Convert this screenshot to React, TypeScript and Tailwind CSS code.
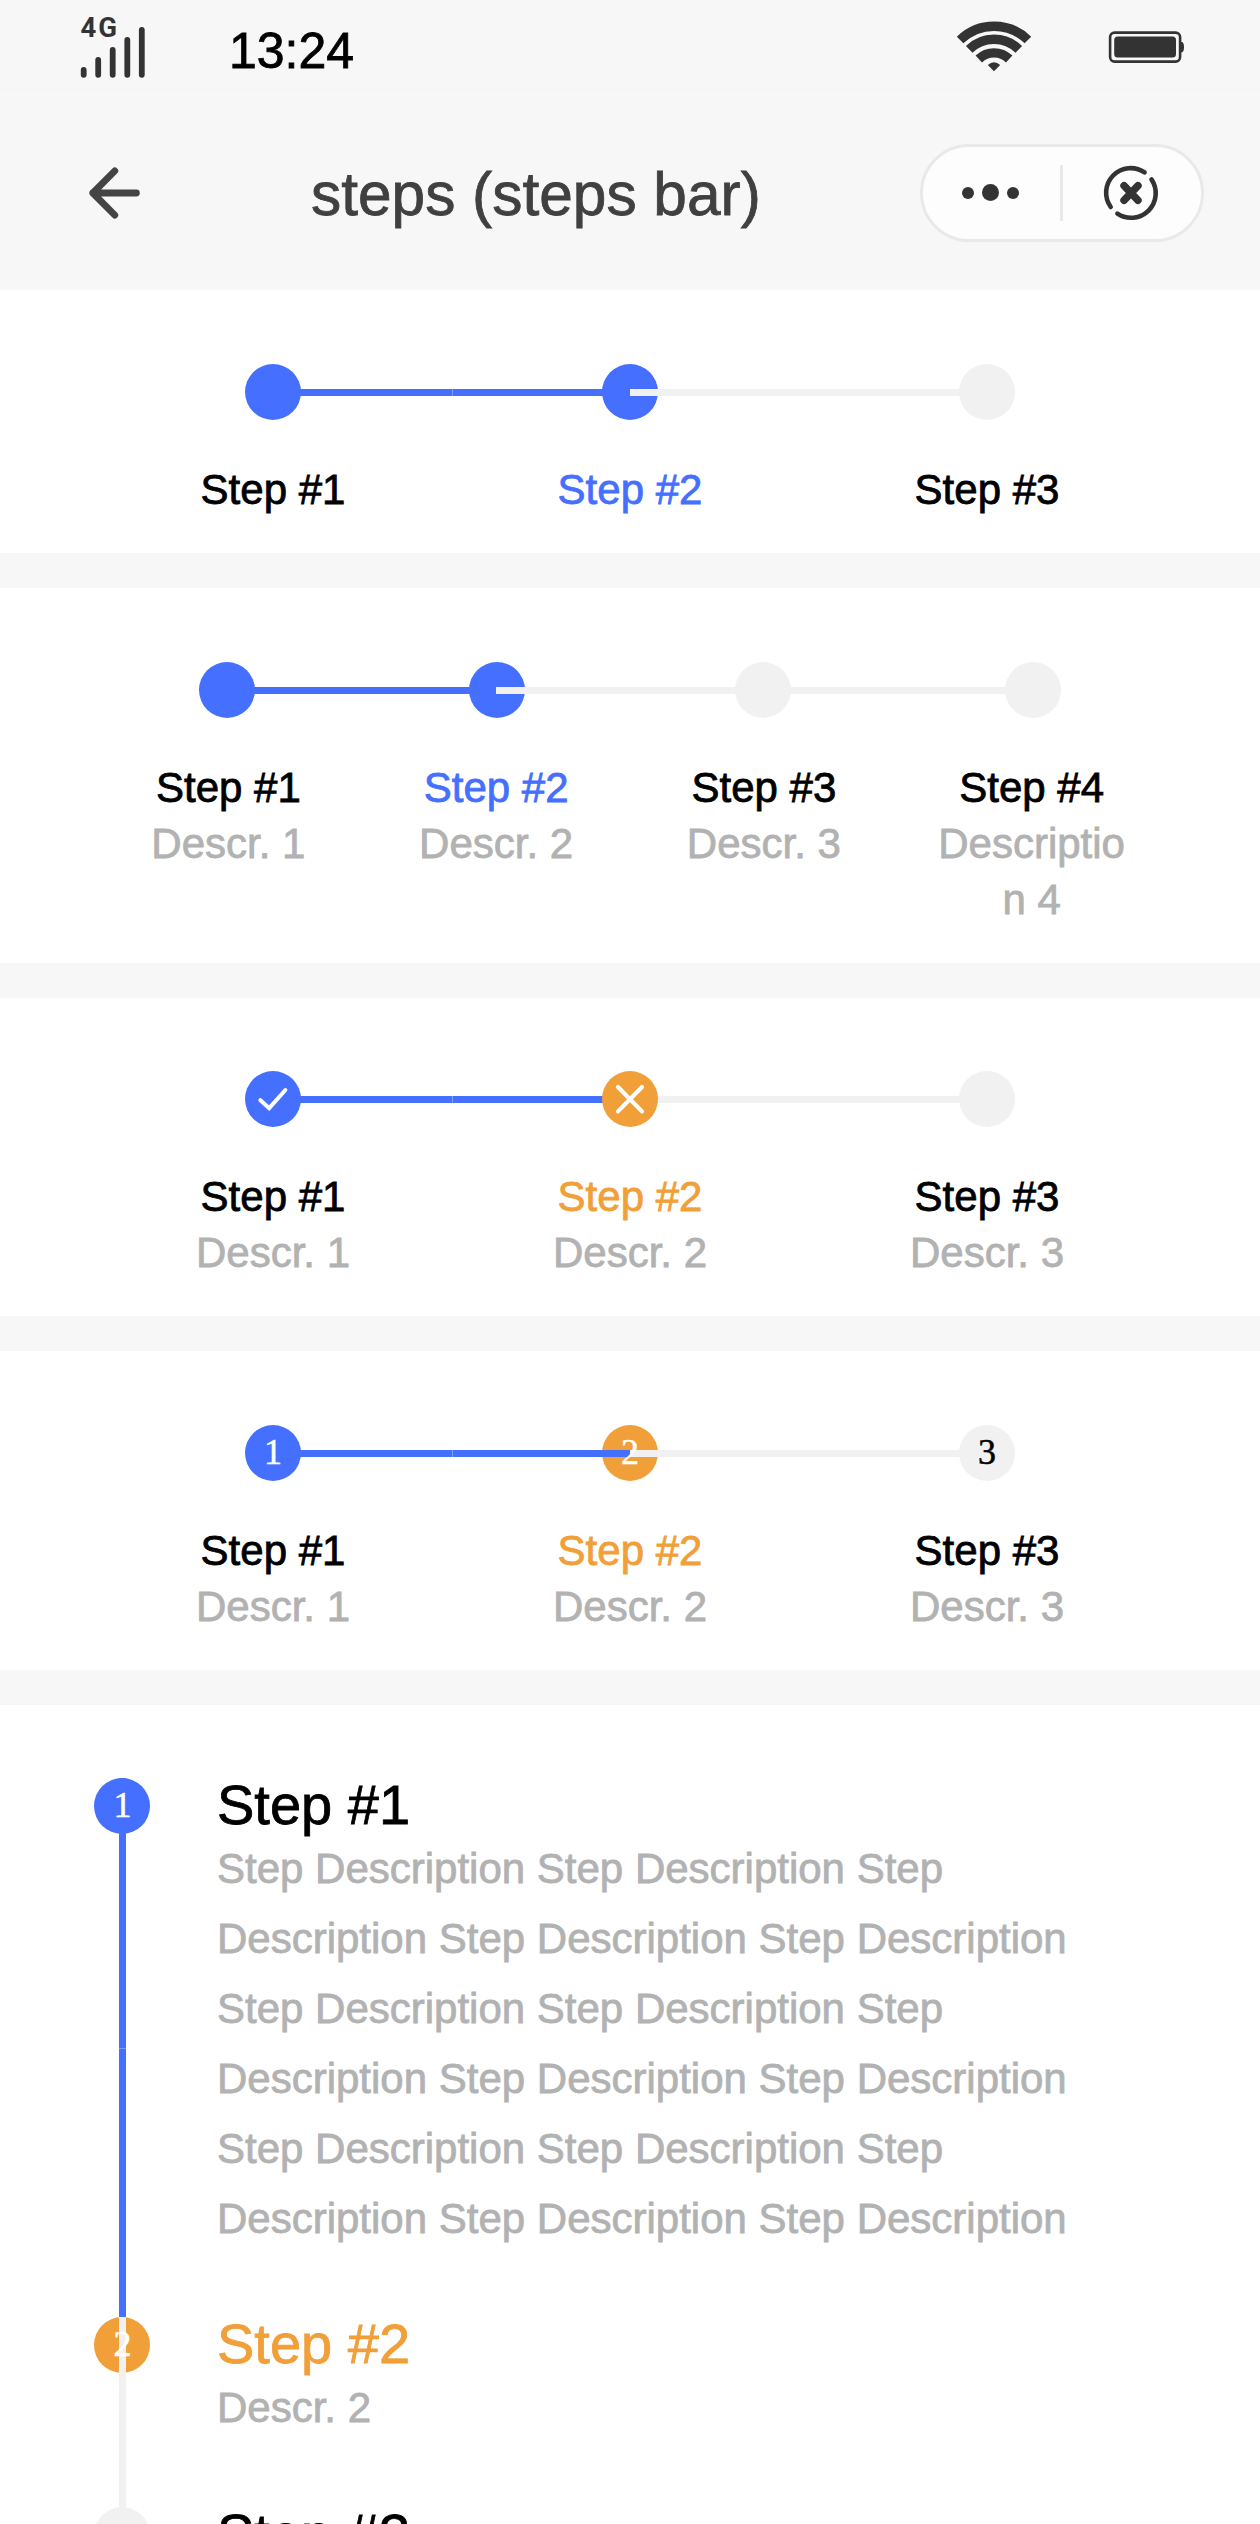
type Tone = "blue" | "gray" | "orange";

interface Step {
  title: string;
  desc?: string;
  tone: Tone;
  active?: boolean;
  mark?: string;
  icon?: "check" | "cross";
  left?: Tone;
  right?: Tone;
  seam?: boolean;
  nudge?: string;
}

const bg: Record<Tone, string> = {
  blue: "bg-[#4570ff]",
  gray: "bg-[#f1f1f1]",
  orange: "bg-[#f19f38]",
};

const ink: Record<Tone, string> = {
  blue: "text-[#4570ff]",
  gray: "text-black",
  orange: "text-[#f19f38]",
};

const HEAVY = "[-webkit-text-stroke:0.8px_currentColor]";

function Mark({ step }: { step: Step }) {
  if (step.icon === "check") {
    return (
      <svg viewBox="0 0 56 56" className="size-14" fill="none" stroke="#fff" strokeWidth="4" strokeLinecap="round">
        <path d="M15.4 29.2 L24.2 37.2 L40.4 19" />
      </svg>
    );
  }
  if (step.icon === "cross") {
    return (
      <svg viewBox="0 0 56 56" className="size-14" fill="none" stroke="#fff" strokeWidth="4.2" strokeLinecap="round">
        <path d="M16 16 L40 40.4 M40 16 L16 40.4" />
      </svg>
    );
  }
  return (
    <span
      className={`font-['Liberation_Serif',serif] text-[36px] leading-[54px] [-webkit-text-stroke:0.5px_currentColor] ${
        step.tone === "gray" ? "text-black" : "text-white"
      }`}
    >
      {step.mark}
    </span>
  );
}

function HorizontalStep({ step }: { step: Step }) {
  return (
    <div className="flex min-w-0 flex-col items-center">
      <div className="relative flex h-14 w-full justify-center">
        {!step.icon && <div className={`size-14 rounded-full ${bg[step.tone]} ${step.nudge ?? ""}`} />}
        {step.left && (
          <div
            className={`absolute left-0 top-[25px] h-[7px] w-1/2 ${bg[step.left]} ${
              step.seam ? "border-l border-[#7f9dff]" : ""
            }`}
          />
        )}
        {step.right && <div className={`absolute left-1/2 top-[25px] h-[7px] w-1/2 ${bg[step.right]}`} />}
        {step.icon && <div className={`relative size-14 rounded-full ${bg[step.tone]}`} />}
        <div className="absolute inset-0 flex items-start justify-center">
          <Mark step={step} />
        </div>
      </div>
      <div className={`mt-[42px] text-[42px] leading-[56px] ${HEAVY} ${step.active ? ink[step.tone] : "text-black"}`}>
        {step.title}
      </div>
      {step.desc && (
        <div className={`w-[190px] text-center text-[42px] leading-[56px] break-all text-[#b2b2b2] ${HEAVY}`}>
          {step.desc}
        </div>
      )}
    </div>
  );
}

function VerticalStep({ step }: { step: Step }) {
  return (
    <div className="flex min-h-[190px]">
      <div className="relative w-[57px] shrink-0">
        <div className={`size-14 rounded-full ${bg[step.tone]}`} />
        <div className={`absolute left-[25px] top-0 h-full w-[7px] ${step.tone === "blue" ? bg.blue : bg.gray}`} />
        {step.seam && <div className="absolute left-[25px] top-1/2 h-px w-[7px] bg-[#7f9dff]" />}
        <div className="absolute inset-x-0 top-0 flex justify-center">
          <Mark step={step} />
        </div>
      </div>
      <div className="ml-[66px] w-[930px] pb-[63px]">
        <div className={`text-[56px] leading-[54px] ${HEAVY} ${step.active ? ink[step.tone] : "text-black"}`}>
          {step.title}
        </div>
        {step.desc && (
          <div className={`mt-0.5 text-[42px] leading-[70px] text-[#b2b2b2] ${HEAVY}`}>{step.desc}</div>
        )}
      </div>
    </div>
  );
}

const basic: Step[] = [
  { title: "Step #1", tone: "blue", right: "blue" },
  { title: "Step #2", tone: "blue", active: true, left: "blue", right: "gray", seam: true },
  { title: "Step #3", tone: "gray", left: "gray" },
];

const described: Step[] = [
  { title: "Step #1", desc: "Descr. 1", tone: "blue", right: "blue", nudge: "-translate-x-px" },
  { title: "Step #2", desc: "Descr. 2", tone: "blue", active: true, left: "blue", right: "gray", nudge: "translate-x-px" },
  { title: "Step #3", desc: "Descr. 3", tone: "gray", left: "gray", right: "gray", nudge: "-translate-x-px" },
  { title: "Step #4", desc: "Description 4", tone: "gray", left: "gray", nudge: "translate-x-px" },
];

const withIcons: Step[] = [
  { title: "Step #1", desc: "Descr. 1", tone: "blue", icon: "check", right: "blue" },
  { title: "Step #2", desc: "Descr. 2", tone: "orange", active: true, icon: "cross", left: "blue", right: "gray", seam: true },
  { title: "Step #3", desc: "Descr. 3", tone: "gray", left: "gray" },
];

const numbered: Step[] = [
  { title: "Step #1", desc: "Descr. 1", tone: "blue", mark: "1", right: "blue" },
  { title: "Step #2", desc: "Descr. 2", tone: "orange", active: true, mark: "2", left: "blue", right: "gray", seam: true },
  { title: "Step #3", desc: "Descr. 3", tone: "gray", mark: "3", left: "gray" },
];

const vertical: Step[] = [
  { title: "Step #1", desc: Array(15).fill("Step Description").join(" "), tone: "blue", mark: "1", seam: true },
  { title: "Step #2", desc: "Descr. 2", tone: "orange", active: true, mark: "2" },
  { title: "Step #3", tone: "gray" },
];

function StatusBar() {
  return (
    <div className="flex h-[95px] items-start border-b border-[#fafafa]">
      <svg viewBox="76 10 72 72" className="ml-[76px] mt-2.5 size-[72px]">
        <text x="80.5" y="37" fontSize="27.5" fontWeight="700" letterSpacing="2" fill="#333" fontFamily="Roboto, sans-serif">
          4G
        </text>
        <g stroke="#333" strokeWidth="5.8" strokeLinecap="round">
          <path d="M83.7 70v4.8M98.2 60v14.8M112.7 50v24.8M127.3 40v34.8M141.8 30v44.8" />
        </g>
      </svg>
      <div className={`ml-[81px] mt-[21px] text-[50px] leading-[60px] text-black ${HEAVY}`}>13:24</div>
      <svg viewBox="952 16 84 60" className="ml-auto mt-4 h-[60px] w-[84px]" fill="none" stroke="#333" strokeWidth="9.4">
        <path d="M960.1 40 A48.6 48.6 0 0 1 1027.9 40" />
        <path d="M969.2 49.4 A35.4 35.4 0 0 1 1018.8 49.4" />
        <path d="M978.8 59 A22 22 0 0 1 1009.2 59" />
        <path d="M994 71.2 L987.8 65 Q994 59.6 1000.2 65 Z" fill="#333" stroke="none" />
      </svg>
      <svg viewBox="1104 26 84 42" className="ml-[68px] mr-[72px] mt-[26px] h-[42px] w-[84px]">
        <rect x="1110.1" y="32.6" width="70" height="29" rx="4.5" fill="none" stroke="#333" strokeWidth="2.6" />
        <rect x="1114.2" y="36.6" width="61.8" height="21" rx="3.5" fill="#333" />
        <path d="M1181 42 h1.2 q1.8 1 1.8 5.2 q0 4.2 -1.8 5 h-1.2 z" fill="#333" />
      </svg>
    </div>
  );
}

function NavBar() {
  return (
    <div className="flex h-[195px] items-center">
      <svg viewBox="85 162 60 60" className="ml-[85px] size-[60px]" fill="none" stroke="#444" strokeWidth="6.8" strokeLinecap="round" strokeLinejoin="round">
        <path d="M136.4 192 H92.8 M114.8 169.8 L92.8 192 L114.8 214.2" />
      </svg>
      <div className={`ml-[166px] mt-0.5 text-[60.4px] leading-[70px] text-[#404040] ${HEAVY}`}>steps (steps bar)</div>
      <div className="ml-auto mr-14 flex h-[98px] w-[284px] items-center rounded-full border-[3.5px] border-[#e9e9e9] bg-[#fdfdfd]">
        <div className="flex w-[137px] items-center justify-center gap-2 pr-0.5">
          <span className="size-3 rounded-full bg-[#333]" />
          <span className="size-[17px] rounded-full bg-[#333]" />
          <span className="size-3 rounded-full bg-[#333]" />
        </div>
        <div className="h-14 w-[3px] bg-[#e9e9e9]" />
        <div className="flex flex-1 items-center justify-center pr-[3px]">
          <svg viewBox="-30 -30 60 60" className="size-[60px]" fill="none" stroke="#333" strokeWidth="4.6" strokeLinecap="round">
            <path d="M13.6 -20.6 A24.6 24.6 0 0 0 -20.3 14" />
            <path d="M20.5 -13.6 A24.6 24.6 0 0 1 -13.6 20.6" />
            <path d="M-7 -7.4 L7 7.4 M7 -7.4 L-7 7.4" strokeWidth="7.4" />
          </svg>
        </div>
      </div>
    </div>
  );
}

export default function App() {
  return (
    <div className="h-[2524px] w-[1260px] overflow-hidden bg-[#f7f7f7] font-['Liberation_Sans',Arial,sans-serif]">
      <StatusBar />
      <NavBar />
      <div className="flex flex-col gap-[35px]">
        <section className="grid h-[263px] grid-cols-3 bg-white px-[94.5px] pt-[74px]">
          {basic.map((s) => (
            <HorizontalStep key={s.title} step={s} />
          ))}
        </section>
        <section className="grid h-[375px] grid-cols-4 bg-white px-[94.5px] pt-[74px]">
          {described.map((s) => (
            <HorizontalStep key={s.title} step={s} />
          ))}
        </section>
        <section className="grid h-[318px] grid-cols-3 bg-white px-[94.5px] pt-[73px]">
          {withIcons.map((s) => (
            <HorizontalStep key={s.title} step={s} />
          ))}
        </section>
        <section className="grid h-[319px] grid-cols-3 bg-white px-[94.5px] pt-[74px]">
          {numbered.map((s) => (
            <HorizontalStep key={s.title} step={s} />
          ))}
        </section>
        <section className="flex flex-col bg-white pl-[94px] pt-[73px]">
          {vertical.map((s) => (
            <VerticalStep key={s.title} step={s} />
          ))}
        </section>
      </div>
    </div>
  );
}
